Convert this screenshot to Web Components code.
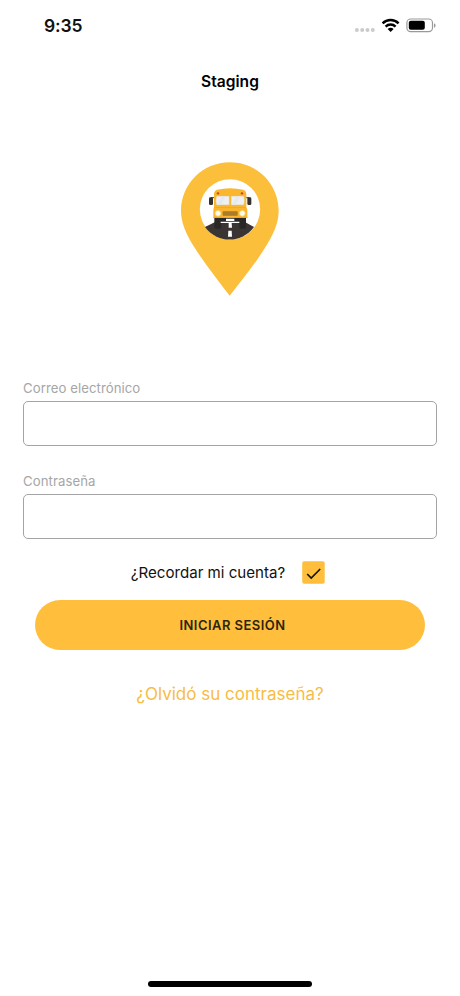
<!DOCTYPE html>
<html lang="es">
<head>
<meta charset="utf-8">
<title>Staging</title>
<style>
    body {
        margin: 0;
        background: #fff;
        font-family: Inter, "Liberation Sans", sans-serif;
    }
</style>
</head>
<body>
<login-screen></login-screen>
<script>
class StatusBar extends HTMLElement {
    constructor() {
        super();
        this.attachShadow({ mode: "open" });
        this.shadowRoot.innerHTML = `
            <style>
                :host {
                    display: flex;
                    justify-content: space-between;
                    align-items: center;
                    height: 51px;
                    padding: 0 24px 0 44px;
                    box-sizing: border-box;
                }
                .time {
                    font-size: 17.5px;
                    font-weight: 600;
                    line-height: 22px;
                    letter-spacing: -0.1px;
                    color: #111;
                }
                svg { display: block; }
            </style>
            <span class="time">${this.getAttribute("time") || ""}</span>
            <svg width="82" height="20" viewBox="354 16 82 20">
                <g fill="#cbcbcb">
                    <circle cx="356.9" cy="30" r="2"/>
                    <circle cx="362.2" cy="30" r="2"/>
                    <circle cx="367.5" cy="30" r="2"/>
                    <circle cx="372.8" cy="30" r="2"/>
                </g>
                <g fill="none" stroke="#000" stroke-width="2.5">
                    <path d="M382.6 23.3a11.6 11.6 0 0 1 16 0"/>
                    <path d="M385.6 26.6a7.3 7.3 0 0 1 10 0"/>
                </g>
                <path d="M387.6 29.1a4.4 4.4 0 0 1 6 0l-3 3z"/>
                <rect x="406.9" y="19" width="25.6" height="12.6" rx="3.8" fill="none" stroke="#999" stroke-width="1.2"/>
                <rect x="408.8" y="20.8" width="16" height="9" rx="2"/>
                <path d="M434 23.2c2.1.8 2.1 3.8 0 4.6z" fill="#999"/>
            </svg>
        `;
    }
}
customElements.define("status-bar", StatusBar);

class BusLogo extends HTMLElement {
    constructor() {
        super();
        this.attachShadow({ mode: "open" });
        this.shadowRoot.innerHTML = `
            <style>
                :host { display: block; width: 120px; height: 155px; }
                svg { display: block; }
            </style>
            <svg width="120" height="155" viewBox="0 0 360 465">
                <path fill="#fcbf3b" d="M180 37C98 37 33 102 33 183c0 37 17 73 42 112 35 54 71 99 104 142 34-43 71-88 105-142 25-39 42-75 42-112C326 102 261 37 180 37z"/>
                <circle cx="180" cy="178" r="90.500" fill="#fff"/>
                <path fill="#3a3532" d="M134 217h92l26 14a90.500 90.500 0 0 1-147 0z"/>
                <!-- wheels and bumper -->
                <path fill="#292827" d="M133 203h95v28q0 5-5 5h-9q-6 0-6-6v-11h-54v11q0 6-6 6h-9q-6 0-6-6z"/>
                <path fill="#fff" d="M168 206h25v7h-25zM152 215h56v4h-56z"/>
                <!-- lane marks -->
                <path fill="#fff" d="M176 219h9l1 14h-10zM175 242h10l1 18h-12z"/>
                <!-- mirrors -->
                <path fill="none" stroke="#4a4033" stroke-width="3" d="M135 143h-12M226 143h12"/>
                <rect x="117" y="142" width="12" height="23" rx="4" fill="#343230"/>
                <rect x="232" y="142" width="12" height="23" rx="4" fill="#343230"/>
                <!-- body -->
                <path fill="#fab62e" d="M132 133q0-11 9-14 39-9 79 0 9 3 9 14v38q3 5 3 13v19H130v-19q0-8 2-13z"/>
                <path fill="#eca82c" d="M133 171h95v2h-95zM130 201h102v3H130z"/>
                <path fill="#edf1f5" stroke="#efba55" stroke-width="1.500" d="M139 138h39v27h-39q-3-13 0-27zM183 138h39q3 14 0 27h-39z"/>
                <path fill="#e4eaef" d="M155 139h12l-13 25h-12zM199 139h12l-13 25h-12z"/>
                <circle cx="144" cy="130" r="3.500" fill="#d83b25"/>
                <circle cx="216" cy="130" r="3.500" fill="#d83b25"/>
                <rect x="158" y="184" width="45" height="13" rx="2" fill="#a57829"/>
                <path fill="none" stroke="#b9852b" stroke-width="1.500" d="M160 188h41M160 192h41"/>
                <circle cx="144" cy="190" r="8.500" fill="#fffbea" stroke="#f6d276" stroke-width="2"/>
                <circle cx="217" cy="190" r="8.500" fill="#fffbea" stroke="#f6d276" stroke-width="2"/>
            </svg>
        `;
    }
}
customElements.define("bus-logo", BusLogo);

class TextField extends HTMLElement {
    constructor() {
        super();
        this.attachShadow({ mode: "open" });
        this.shadowRoot.innerHTML = `
            <style>
                :host { display: block; }
                label {
                    display: block;
                    height: 18px;
                    margin-bottom: 4px;
                    font-size: 13.2px;
                    line-height: 18px;
                    letter-spacing: 0.06px;
                    color: #a6a6a6;
                }
                input {
                    display: block;
                    box-sizing: border-box;
                    width: 100%;
                    height: 44.5px;
                    padding: 0 12px;
                    border: 1px solid #a4a4a4;
                    border-radius: 5px;
                    background: #fff;
                    font: inherit;
                    outline: none;
                }
            </style>
            <label for="field"><slot></slot></label>
            <input id="field" type="${this.getAttribute("type") || "text"}">
        `;
    }
}
customElements.define("text-field", TextField);

class CheckOption extends HTMLElement {
    constructor() {
        super();
        this.attachShadow({ mode: "open" });
        this.shadowRoot.innerHTML = `
            <style>
                :host {
                    display: flex;
                    align-items: center;
                    gap: 17px;
                    font-size: 15.1px;
                    line-height: 23px;
                    color: #111;
                }
                svg { display: block; }
            </style>
            <span><slot></slot></span>
            <svg width="23" height="23" viewBox="0 0 23 23">
                <rect x=".2" y=".2" width="22.500" height="22.500" rx="2" fill="#ffbf3c"/>
                <path d="M5.200 13l4 4 9-9" fill="none" stroke="#16130c" stroke-width="1.700"/>
            </svg>
        `;
    }
}
customElements.define("check-option", CheckOption);

class PillButton extends HTMLElement {
    constructor() {
        super();
        this.attachShadow({ mode: "open" });
        this.shadowRoot.innerHTML = `
            <style>
                :host { display: block; }
                button {
                    display: block;
                    width: 100%;
                    height: 50px;
                    padding: 0 0 0 5px;
                    border: 0;
                    border-radius: 25px;
                    background: #ffbf3c;
                    color: #2f240f;
                    font: 600 13px/50px Inter, "Liberation Sans", sans-serif;
                    letter-spacing: 0.45px;
                }
            </style>
            <button type="button"><slot></slot></button>
        `;
    }
}
customElements.define("pill-button", PillButton);

class LoginScreen extends HTMLElement {
    constructor() {
        super();
        this.attachShadow({ mode: "open" });
        this.shadowRoot.innerHTML = `
            <style>
                :host {
                    display: flex;
                    flex-direction: column;
                    align-items: center;
                    width: 460px;
                    height: 996px;
                    overflow: hidden;
                }
                status-bar { width: 100%; }
                h1 {
                    margin: 21px 0 0;
                    font-size: 15.6px;
                    font-weight: 600;
                    line-height: 20px;
                    color: #000;
                }
                bus-logo { margin-top: 58px; }
                form {
                    display: flex;
                    flex-direction: column;
                    align-items: center;
                    width: 414px;
                    margin-top: 74px;
                }
                text-field { width: 100%; }
                text-field + text-field { margin-top: 26.5px; }
                check-option { margin: 22.5px 0 0 -4px; }
                pill-button { width: 390px; margin-top: 16px; }
                a {
                    margin-top: 33px;
                    font-size: 17px;
                    line-height: 22px;
                    color: #f8bc45;
                    text-decoration: none;
                }
                .home {
                    width: 164px;
                    height: 6px;
                    margin: auto 0 9px;
                    border-radius: 3px;
                    background: #000;
                }
            </style>
            <status-bar time="9:35"></status-bar>
            <h1>Staging</h1>
            <bus-logo></bus-logo>
            <form>
                <text-field type="email">Correo electrónico</text-field>
                <text-field type="password">Contraseña</text-field>
                <check-option>¿Recordar mi cuenta?</check-option>
                <pill-button>INICIAR SESIÓN</pill-button>
                <a>¿Olvidó su contraseña?</a>
            </form>
            <div class="home"></div>
        `;
    }
}
customElements.define("login-screen", LoginScreen);
</script>
</body>
</html>
